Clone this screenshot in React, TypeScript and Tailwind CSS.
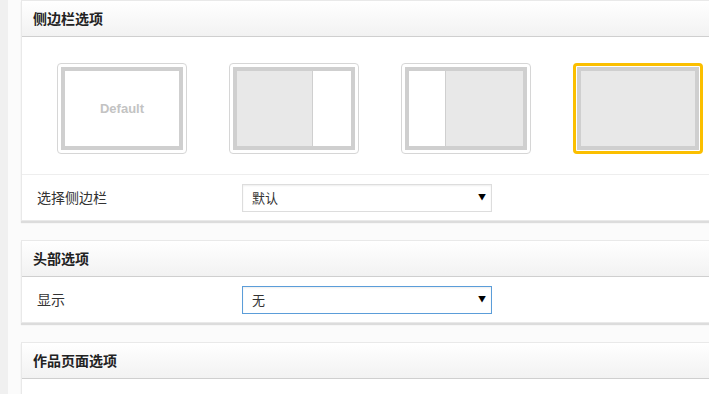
import { ReactNode } from 'react';

// Opciones de la barra lateral
type Layout = 'default' | 'right' | 'left' | 'full';

const layouts: { key: Layout; selected?: boolean }[] = [
  { key: 'default' },
  { key: 'right' },
  { key: 'left' },
  { key: 'full', selected: true },
];

const cjk = { fontFamily: '"Noto Sans CJK SC", "Liberation Sans", sans-serif' };

const LayoutThumb = ({ layout, selected }: { layout: Layout; selected?: boolean }) => {
  const inner = (() => {
    if (layout === 'default') {
      return (
        <div className="flex h-full w-full items-center justify-center bg-white">
          <span className="text-[13px] font-bold text-[#c3c3c3]" style={{ fontFamily: '"Liberation Sans", Arial, sans-serif' }}>
            Default
          </span>
        </div>
      );
    }
    if (layout === 'right') {
      return (
        <div className="flex h-full w-full">
          <div className="flex-1 border-r border-[#cfcfcf] bg-[#e8e8e8]" />
          <div className="w-[38px] bg-white" />
        </div>
      );
    }
    if (layout === 'left') {
      return (
        <div className="flex h-full w-full">
          <div className="w-[37px] border-r border-[#cfcfcf] bg-white" />
          <div className="flex-1 bg-[#e8e8e8]" />
        </div>
      );
    }
    return <div className="h-full w-full bg-[#e8e8e8]" />;
  })();

  return (
    <div
      className={`h-[91px] w-[130px] rounded-[4px] ${
        selected ? 'border-[3px] border-[#fbbf00] p-[1px]' : 'border border-[#d6d6d6] p-[3px]'
      }`}
    >
      <div className="h-full w-full border-[4px] border-[#cfcfcf]">{inner}</div>
    </div>
  );
};

const Select = ({ value, focused }: { value: string; focused?: boolean }) => (
  <div
    className={`relative flex h-[28px] w-[250px] items-center border bg-white pl-[9px] text-[13px] text-[#333] shadow-[inset_0_1px_2px_rgba(0,0,0,0.07)] ${
      focused ? 'border-[#5b9dd9]' : 'border-[#dddddd]'
    }`}
    style={cjk}
  >
    {value}
    <span className="absolute right-[5px] top-[8px] text-[8px] leading-none text-black">▼</span>
  </div>
);

const Card = ({ title, children }: { title: string; children: ReactNode }) => (
  <div className="border border-[#e9e9e9] bg-white shadow-[0_2px_1px_rgba(0,0,0,0.12)]">
    <div className="flex h-[36px] items-center border-b border-[#cfcfcf] bg-gradient-to-b from-white to-[#f2f2f2] pl-[11px]">
      <h3 className="text-[14px] font-bold text-[#222]" style={cjk}>
        {title}
      </h3>
    </div>
    {children}
  </div>
);

const Row = ({ label, children }: { label: string; children?: ReactNode }) => (
  <div className="flex h-[45px] items-center">
    <span className="w-[220px] pl-[15px] text-[14px] text-[#333]" style={cjk}>
      {label}
    </span>
    {children}
  </div>
);

const App = () => {
  return (
    <div className="flex h-[394px] w-[709px] overflow-hidden bg-[#fbfbfb]">
      <div className="w-[8px] shrink-0 bg-[#f0f0f0]" />
      <div className="flex w-[720px] shrink-0 flex-col gap-[19px] pl-[13px]">
        {/* Barra lateral */}
        <Card title="侧边栏选项">
          <div className="flex gap-[42px] border-b border-[#eeeeee] pb-[20px] pl-[35px] pt-[26px]">
            {layouts.map((l) => (
              <LayoutThumb key={l.key} layout={l.key} selected={l.selected} />
            ))}
          </div>
          <Row label="选择侧边栏">
            <Select value="默认" />
          </Row>
        </Card>

        {/* Cabecera */}
        <Card title="头部选项">
          <Row label="显示">
            <Select value="无" focused />
          </Row>
        </Card>

        {/* Página de obras */}
        <Card title="作品页面选项">
          <Row label="作品排序" />
        </Card>
      </div>
    </div>
  );
};

export default App;
